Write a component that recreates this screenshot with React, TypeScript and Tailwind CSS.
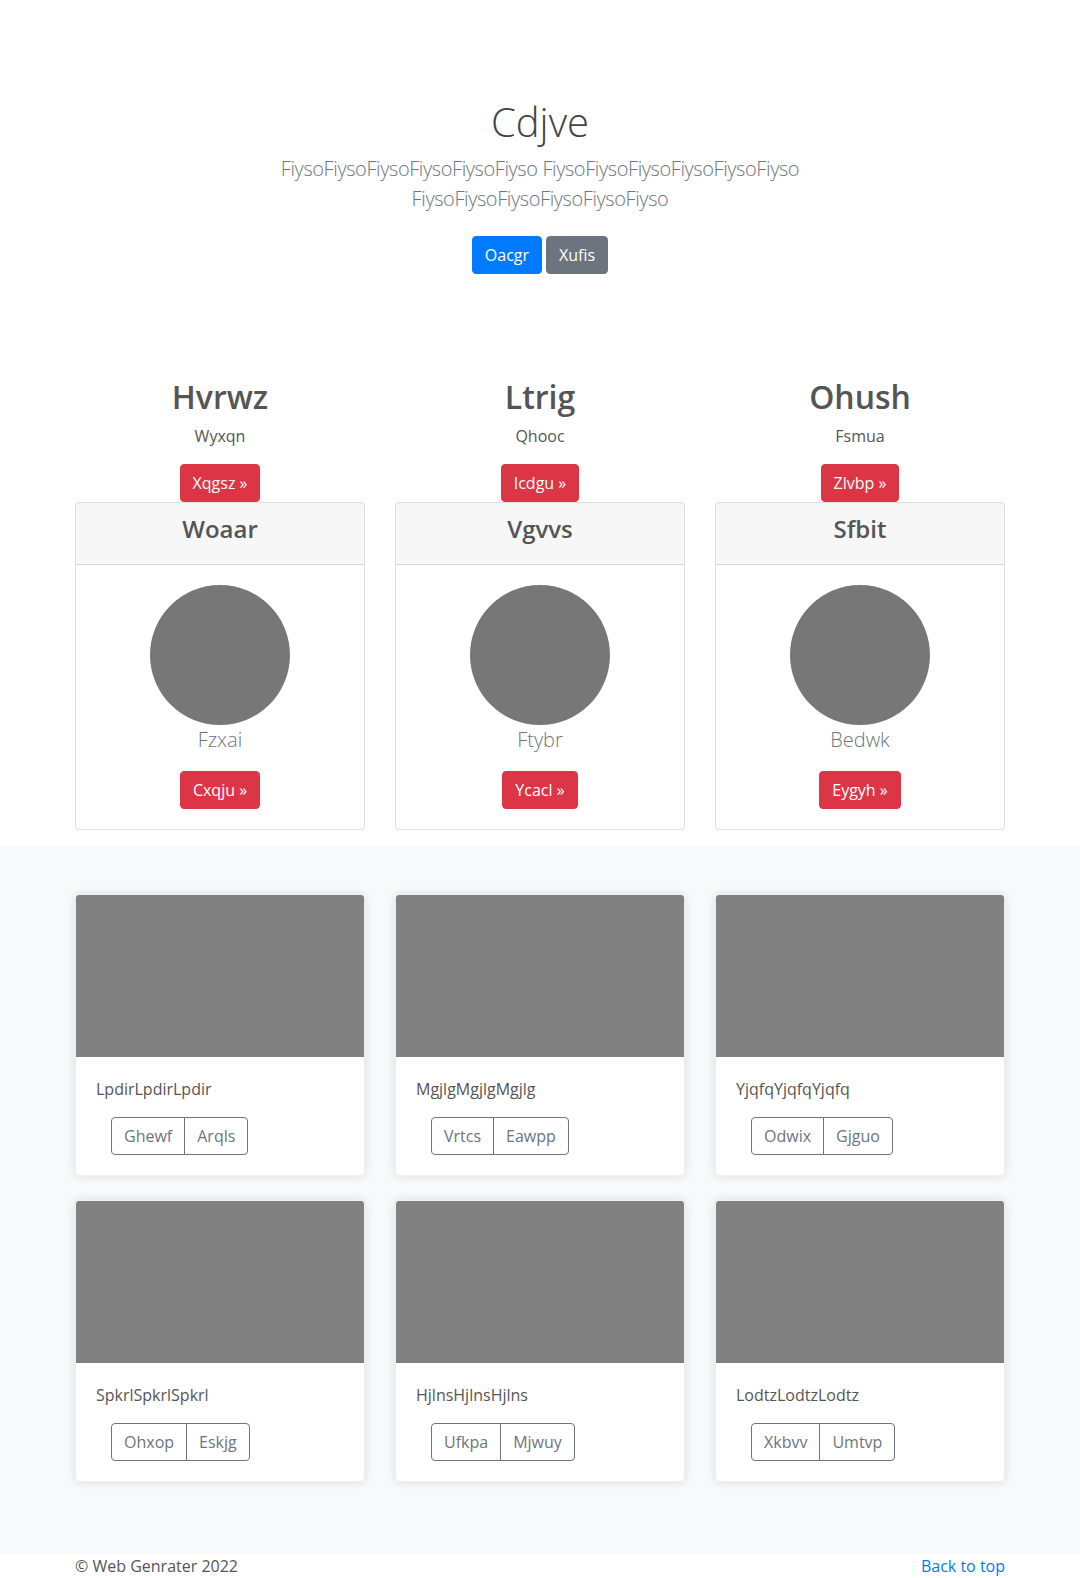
import React from 'react';

const font = { fontFamily: '"Segoe UI", "Open Sans", "Noto Sans", sans-serif' };

const features = [
  { title: 'Hvrwz', sub: 'Wyxqn', btn: 'Xqgsz', head: 'Woaar', name: 'Fzxai', action: 'Cxqju' },
  { title: 'Ltrig', sub: 'Qhooc', btn: 'Icdgu', head: 'Vgvvs', name: 'Ftybr', action: 'Ycacl' },
  { title: 'Ohush', sub: 'Fsmua', btn: 'Zlvbp', head: 'Sfbit', name: 'Bedwk', action: 'Eygyh' },
];

const albums = [
  { text: 'LpdirLpdirLpdir', a: 'Ghewf', b: 'Arqls' },
  { text: 'MgjlgMgjlgMgjlg', a: 'Vrtcs', b: 'Eawpp' },
  { text: 'YjqfqYjqfqYjqfq', a: 'Odwix', b: 'Gjguo' },
  { text: 'SpkrlSpkrlSpkrl', a: 'Ohxop', b: 'Eskjg' },
  { text: 'HjlnsHjlnsHjlns', a: 'Ufkpa', b: 'Mjwuy' },
  { text: 'LodtzLodtzLodtz', a: 'Xkbvv', b: 'Umtvp' },
];

const DangerButton: React.FC<{ label: string }> = ({ label }) => (
  <button className="inline-block bg-[#dc3545] text-white text-base leading-6 px-3 py-[6px] rounded-[4px] border border-[#dc3545]">
    {label} &raquo;
  </button>
);

export default function App() {
  return (
    <div style={font} className="bg-white text-[#555]">
      {/* hero */}
      <section className="pt-[98px] pb-[96px] text-center">
        <div className="max-w-[960px] mx-auto px-[15px]">
          <h1 className="text-[40px] leading-[1.2] font-light mb-2 text-[#444]">Cdjve</h1>
          <p className="text-[20px] leading-[1.5] font-light tracking-[-0.02em] text-[#6c757d] mb-[14px] max-w-[610px] mx-auto">
            FiysoFiysoFiysoFiysoFiysoFiyso FiysoFiysoFiysoFiysoFiysoFiyso FiysoFiysoFiysoFiysoFiysoFiyso
          </p>
          <p className="flex justify-center gap-1">
            <button className="my-2 bg-[#007bff] border border-[#007bff] text-white text-base leading-6 px-3 py-[6px] rounded-[4px]">
              Oacgr
            </button>
            <button className="my-2 bg-[#6c757d] border border-[#6c757d] text-white text-base leading-6 px-3 py-[6px] rounded-[4px]">
              Xufis
            </button>
          </p>
        </div>
      </section>

      {/* features */}
      <section className="max-w-[960px] mx-auto px-[15px] pb-4">
        <div className="grid grid-cols-3 gap-[30px]">
          {features.map((f) => (
            <div key={f.title} className="text-center">
              <h2 className="text-[32px] leading-[1.2] font-semibold mb-2">{f.title}</h2>
              <p className="text-base leading-6 mb-4">{f.sub}</p>
              <DangerButton label={f.btn} />
              <div className="border border-[rgba(0,0,0,0.125)] rounded-[4px] bg-white">
                <div className="bg-[rgba(0,0,0,0.03)] border-b border-[rgba(0,0,0,0.125)] px-5 py-3">
                  <h4 className="text-[24px] leading-[1.2] font-semibold mb-2">{f.head}</h4>
                </div>
                <div className="p-5">
                  <div className="w-[140px] h-[140px] rounded-full bg-[#777] mx-auto" />
                  <p className="text-[20px] leading-[1.5] font-light text-[#6c757d] mb-4">{f.name}</p>
                  <DangerButton label={f.action} />
                </div>
              </div>
            </div>
          ))}
        </div>
      </section>

      {/* album */}
      <section className="bg-[#f8f9fa] pt-12 pb-[72px]">
        <div className="max-w-[960px] mx-auto px-[15px]">
          <div className="grid grid-cols-3 gap-x-[30px] gap-y-6">
            {albums.map((a) => (
              <div key={a.text} className="bg-white rounded-[4px] overflow-hidden border border-[rgba(0,0,0,0.06)] shadow-[0_0_10px_rgba(0,0,0,0.12)]">
                <div className="h-[162px] bg-[#808080]" />
                <div className="p-5">
                  <p className="text-base leading-6 mb-4">{a.text}</p>
                  <div className="inline-flex ml-[15px]">
                    <button className="border border-[#6c757d] text-[#6c757d] text-base leading-6 px-3 py-[6px] rounded-l-[4px]">
                      {a.a}
                    </button>
                    <button className="-ml-px border border-[#6c757d] text-[#6c757d] text-base leading-6 px-3 py-[6px] rounded-r-[4px]">
                      {a.b}
                    </button>
                  </div>
                </div>
              </div>
            ))}
          </div>
        </div>
      </section>

      {/* footer */}
      <footer className="max-w-[960px] mx-auto px-[15px] flex justify-between text-base leading-6 pb-12">
        <p className="text-[#555]">&copy; Web Genrater 2022</p>
        <a href="#" className="text-[#007bff]">Back to top</a>
      </footer>
    </div>
  );
}
